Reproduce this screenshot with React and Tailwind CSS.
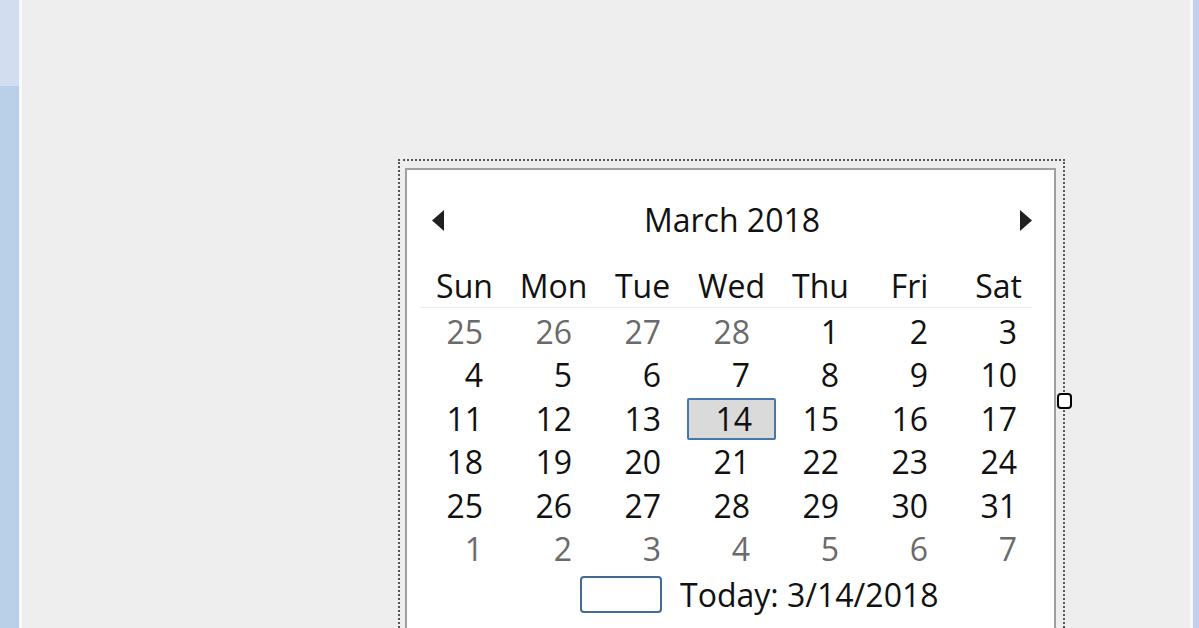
const weeks = [
  [[25, 0], [26, 0], [27, 0], [28, 0], [1, 1], [2, 1], [3, 1]],
  [[4, 1], [5, 1], [6, 1], [7, 1], [8, 1], [9, 1], [10, 1]],
  [[11, 1], [12, 1], [13, 1], [14, 1], [15, 1], [16, 1], [17, 1]],
  [[18, 1], [19, 1], [20, 1], [21, 1], [22, 1], [23, 1], [24, 1]],
  [[25, 1], [26, 1], [27, 1], [28, 1], [29, 1], [30, 1], [31, 1]],
  [[1, 0], [2, 0], [3, 0], [4, 0], [5, 0], [6, 0], [7, 0]],
];

const dayNames = ["Sun", "Mon", "Tue", "Wed", "Thu", "Fri", "Sat"];

function Arrow({ dir }) {
  return (
    <svg width="13" height="21" viewBox="0 0 13 21">
      {dir === "left" ? (
        <polygon points="12,0 0,10.5 12,21" fill="#1f1f1f" />
      ) : (
        <polygon points="1,0 13,10.5 1,21" fill="#1f1f1f" />
      )}
    </svg>
  );
}

function DayCell({ day, current, selected }) {
  if (selected) {
    return (
      <div className="h-full flex items-center">
        <div className="w-full h-[42px] flex items-center justify-end pr-[22px] bg-[#dadada] border-2 border-[#4677ab] rounded-[2px] text-[#111111]">
          {day}
        </div>
      </div>
    );
  }
  return (
    <div
      className={`h-full flex items-center justify-end pr-[26px] ${
        current ? "text-[#111111]" : "text-[#6a6a6a]"
      }`}
    >
      {day}
    </div>
  );
}

export default function App() {
  return (
    <div
      className="h-[628px] w-[1199px] flex overflow-hidden leading-none"
      style={{ fontFamily: '"Open Sans", "Noto Sans", sans-serif' }}
    >
      {/* left window edge */}
      <div className="w-[19px] flex flex-col">
        <div className="h-[86px] bg-[#d2deef]" />
        <div className="flex-1 bg-[#b9d0e8]" />
      </div>
      <div className="w-[3px] bg-[#f7f9fd]" />

      {/* designer surface */}
      <div className="flex-1 bg-[#eeeeee] pl-[376px] pt-[159px]">
        <div className="relative w-[667px] h-[520px] border-2 border-dotted border-[#555555] pt-[7px] pl-[5px] pr-[6px]">
          {/* resize handle */}
          <div className="absolute right-[-9px] top-[232px] w-[15px] h-[16px] bg-white border-2 border-black rounded-[4px]" />

          <div className="w-[651px] h-[500px] bg-white border-2 border-[#a0a0a0] pt-[25px] text-[32px] text-[#111111]">
            {/* header */}
            <div className="h-[50px] flex items-center justify-between pl-[25px] pr-[22px]">
              <Arrow dir="left" />
              <div>March 2018</div>
              <Arrow dir="right" />
            </div>

            <div className="pl-[13px] mt-[20px]">
              {/* day names */}
              <div className="grid grid-cols-[repeat(7,89px)] h-[43px] border-b border-[#ececec] w-[612px]">
                {dayNames.map((d) => (
                  <div key={d} className="flex items-center justify-center">
                    {d}
                  </div>
                ))}
              </div>

              {/* dates */}
              <div className="pt-[2px]">
                {weeks.map((week, wi) => (
                  <div key={wi} className="grid grid-cols-[repeat(7,89px)] h-[43.5px]">
                    {week.map(([day, current], di) => (
                      <DayCell
                        key={di}
                        day={day}
                        current={current}
                        selected={wi === 2 && di === 3}
                      />
                    ))}
                  </div>
                ))}
              </div>

              {/* today */}
              <div className="h-[47px] flex items-center pl-[160px] gap-[18px]">
                <div className="w-[82px] h-[37px] border-2 border-[#426b94] rounded-[4px]" />
                <div>Today: 3/14/2018</div>
              </div>
            </div>
          </div>
        </div>
      </div>

      {/* right window edge */}
      <div className="w-[3px] bg-[#f8f8fb]" />
      <div className="w-[6px] bg-[#c2d1e9]" />
    </div>
  );
}
